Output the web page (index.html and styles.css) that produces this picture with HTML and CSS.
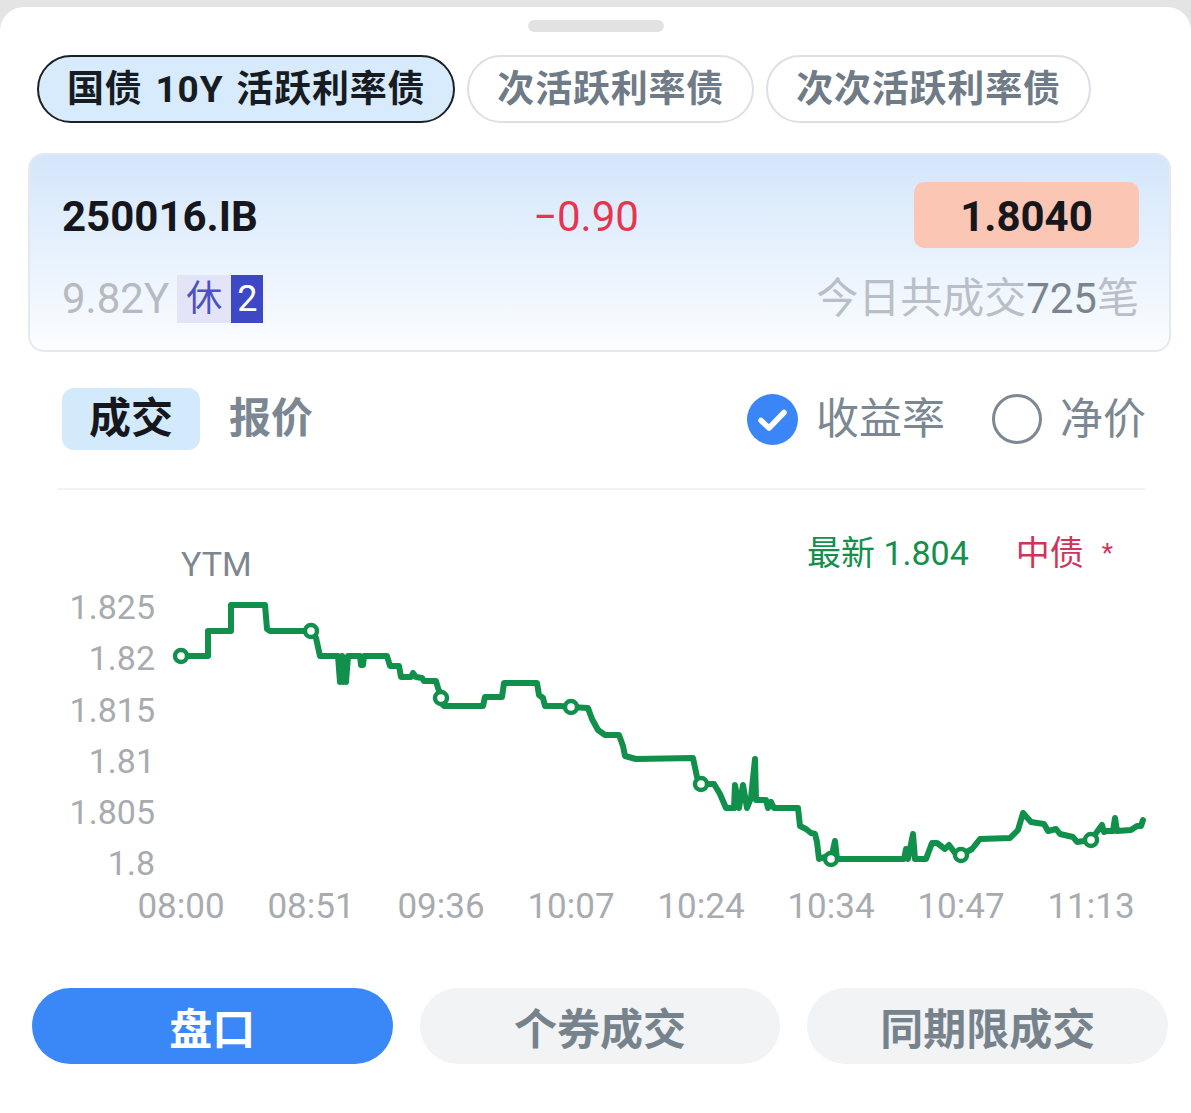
FILE: index.html
```html
<!DOCTYPE html>
<html lang="zh-CN">
<head>
  <meta charset="UTF-8" />
  <title>国债 10Y 活跃利率债</title>
  <meta name="viewport" content="width=device-width, initial-scale=1.0">
  <link rel="stylesheet" href="styles.css">
</head>
<body>
  <div class="sheet">
    <div class="handle"></div>

    <div class="bond-tabs">
      <div class="bond-tab active">国债 10Y 活跃利率债</div>
      <div class="bond-tab">次活跃利率债</div>
      <div class="bond-tab">次次活跃利率债</div>
    </div>

    <div class="quote-card">
      <div class="quote-row">
        <span class="code">250016.IB</span>
        <span class="change">−0.90</span>
        <span class="last">1.8040</span>
      </div>
      <div class="quote-row second">
        <span class="tenor">9.82Y<span class="tag tag-rest">休</span><span class="tag tag-num">2</span></span>
        <span class="deals">今日共成交<b>725</b>笔</span>
      </div>
    </div>

    <div class="trade-bar">
      <div class="seg active">成交</div>
      <div class="seg">报价</div>
      <div class="modes">
        <div class="mode">
          <svg class="check" width="51" height="51" viewBox="0 0 51 51">
            <circle cx="25.5" cy="25.5" r="25.5" fill="#3b86f6"/>
            <path d="M14 26.5 L22 34 L37 18.5" fill="none" stroke="#fff" stroke-width="5.5" stroke-linecap="round" stroke-linejoin="round"/>
          </svg>
          收益率
        </div>
        <div class="mode">
          <span class="radio"></span>
          净价
        </div>
      </div>
    </div>

    <div class="divider"></div>

    <div class="legend">
      <span class="ytm">YTM</span>
      <span class="latest">最新 1.804<span class="src">中债</span><span class="star">*</span></span>
    </div>

    <!-- 收益率走势：坐标直接用页面像素 -->
    <svg class="chart" width="1191" height="360" viewBox="0 580 1191 360">
      <g class="y-axis">
        <text x="155" y="609">1.825</text>
        <text x="155" y="660">1.82</text>
        <text x="155" y="712">1.815</text>
        <text x="155" y="763">1.81</text>
        <text x="155" y="814">1.805</text>
        <text x="155" y="865">1.8</text>
      </g>
      <g class="x-axis">
        <text x="181" y="908">08:00</text>
        <text x="311" y="908">08:51</text>
        <text x="441" y="908">09:36</text>
        <text x="571" y="908">10:07</text>
        <text x="701" y="908">10:24</text>
        <text x="831" y="908">10:34</text>
        <text x="961" y="908">10:47</text>
        <text x="1091" y="908">11:13</text>
      </g>
      <polyline class="line" points="181,658 208,658 208,633 231,633 231,607 265,607 267,631 270,633 311,633 316,640 320,658 338,658 340,684 342,658 343,684 345,660 346,684 348,658 360,658 361,667 363,667 364,658 387,658 390,668 399,668 401,679 411,679 413,675 416,679 422,680 424,683 436,683 438,690 440,695 441,705 444,708 451,708 483,708 485,699 502,699 504,685 537,685 539,697 543,700 545,708 560,708 571,709 588,710 592,721 598,732 605,737 619,737 623,748 625,758 636,761 693,760 697,779 701,786 714,786 720,796 726,810 734,810 735,787 739,810 743,787 747,810 751,800 755,761 756,802 766,802 768,810 771,804 774,810 798,810 800,828 806,831 811,835 815,836 817,844 819,861 827,858 831,861 835,843 837,861 843,861 904,861 906,851 908,861 913,836 915,861 926,861 932,845 937,845 945,851 949,847 955,855 961,857 972,851 980,841 1010,840 1018,832 1023,815 1031,824 1044,826 1048,833 1056,831 1060,836 1073,839 1077,844 1091,842 1102,827 1104,834 1106,833 1113,833 1115,820 1117,833 1131,832 1137,828 1141,828 1143,822"/>
      <g class="dots">
        <circle cx="181" cy="658" r="6"/>
        <circle cx="311" cy="633" r="6"/>
        <circle cx="441" cy="700" r="6"/>
        <circle cx="571" cy="709" r="6"/>
        <circle cx="701" cy="786" r="6"/>
        <circle cx="831" cy="861" r="6"/>
        <circle cx="961" cy="857" r="6"/>
        <circle cx="1091" cy="842" r="6"/>
      </g>
    </svg>

    <div class="actions">
      <div class="action primary">盘口</div>
      <div class="action">个券成交</div>
      <div class="action">同期限成交</div>
    </div>
  </div>
</body>
</html>
```

FILE: styles.css
```css
body {
  margin: 0;
  background: #e4e4e4;
  font-family: Roboto, "Noto Sans CJK SC", sans-serif;
}
.sheet {
  margin-top: 7px;
  height: 1106px;
  background: #fff;
  border-radius: 24px 24px 0 0;
  overflow: hidden;
}
.handle {
  width: 136px;
  height: 12px;
  margin: 13px auto 0;
  border-radius: 6px;
  background: #e2e2e2;
}

/* 债券切换 */
.bond-tabs {
  display: flex;
  gap: 12px;
  margin-top: 23px;
  padding-left: 37px;
}
.bond-tab {
  display: flex;
  align-items: center;
  height: 68px;
  box-sizing: border-box;
  padding: 0 28px;
  border: 2px solid #dcdfe3;
  border-radius: 34px;
  font-size: 37px;
  font-weight: 700;
  line-height: 1;
  color: #6f7b86;
  letter-spacing: 0.8px;
  word-spacing: 3px;
  white-space: pre;
}
.bond-tab.active {
  border-color: #1b2027;
  background: #d7ebfc;
  color: #171b22;
}

/* 行情卡片 */
.quote-card {
  height: 199px;
  box-sizing: border-box;
  margin: 30px 20px 0 28px;
  padding: 27px 30px 0 32px;
  border: 2px solid #e5e9ee;
  border-radius: 16px;
  background: linear-gradient(#d4e6fb, #fbfdff);
}
.quote-row {
  display: flex;
  align-items: center;
  justify-content: space-between;
  height: 66px;
  font-size: 42px;
  line-height: 1;
}
.quote-row.second {
  height: 48px;
  margin-top: 27px;
}
.code,
.change {
  padding-top: 3px;
}
.code {
  font-weight: 700;
  color: #15171c;
}
.change {
  color: #e8344f;
}
.last {
  display: flex;
  align-items: center;
  justify-content: center;
  width: 225px;
  height: 66px;
  box-sizing: border-box;
  padding-top: 3px;
  border-radius: 10px;
  background: #fbc6b3;
  font-weight: 700;
  color: #15171c;
}
.tenor {
  display: flex;
  align-items: center;
  color: #b7bbc1;
}
.tag {
  font-size: 36px;
  line-height: 48px;
}
.tag-rest {
  margin-left: 8px;
  padding: 0 9px;
  background: #e3e4f8;
  color: #4b50c2;
}
.tag-num {
  padding: 0 6px;
  background: #3e47c5;
  color: #fff;
}
.deals {
  color: #b9bfc7;
}
.deals b {
  font-weight: 400;
  color: #7b858f;
}

/* 成交 / 报价 */
.trade-bar {
  display: flex;
  align-items: center;
  height: 62px;
  margin-top: 36px;
  padding: 0 45px 0 62px;
  font-size: 42px;
  line-height: 1;
}
.seg {
  margin-left: 29px;
  font-weight: 700;
  color: #7b8792;
}
.seg.active {
  display: flex;
  align-items: center;
  height: 62px;
  margin-left: 0;
  padding: 0 27px;
  border-radius: 12px;
  background: #d3e9fc;
  color: #15171c;
}
.modes {
  display: flex;
  align-items: center;
  gap: 47px;
  margin-left: auto;
}
.mode {
  display: flex;
  align-items: center;
  gap: 18px;
  font-size: 43px;
  color: #7b8792;
}
.check {
  display: block;
}
.radio {
  width: 50px;
  height: 50px;
  box-sizing: border-box;
  border: 3px solid #7d8892;
  border-radius: 50%;
}
.divider {
  height: 2px;
  margin: 38px 46px 0 57px;
  background: #f0f2f4;
}

/* 图表 */
.legend {
  display: flex;
  align-items: flex-start;
  height: 88px;
  padding: 0 78px 0 181px;
  font-size: 34px;
  line-height: 40px;
}
.ytm {
  margin-top: 54px;
  color: #7e8791;
}
.latest {
  margin-left: auto;
  margin-top: 43px;
  color: #13904b;
}
.src {
  margin-left: 47px;
  color: #d03459;
}
.star {
  margin-left: 18px;
  font-size: 26px;
  vertical-align: top;
  color: #d03459;
}
.chart {
  display: block;
}
.chart text {
  font-family: Roboto, sans-serif;
  fill: #a8abaf;
  dominant-baseline: central;
}
.y-axis text {
  font-size: 34px;
  text-anchor: end;
}
.x-axis text {
  font-size: 35px;
  text-anchor: middle;
}
.line {
  fill: none;
  stroke: #10904b;
  stroke-width: 6;
  stroke-linejoin: round;
  stroke-linecap: round;
}
.dots circle {
  fill: #fff;
  stroke: #10904b;
  stroke-width: 4.5;
}

/* 底部按钮 */
.actions {
  display: flex;
  gap: 27px;
  margin-top: 50px;
  padding: 0 23px 0 32px;
}
.action {
  flex: 1;
  display: flex;
  align-items: center;
  justify-content: center;
  height: 76px;
  border-radius: 38px;
  background: #f1f3f5;
  font-size: 43px;
  font-weight: 700;
  color: #77838c;
}
.action.primary {
  background: #3a87f7;
  color: #fff;
}
```
